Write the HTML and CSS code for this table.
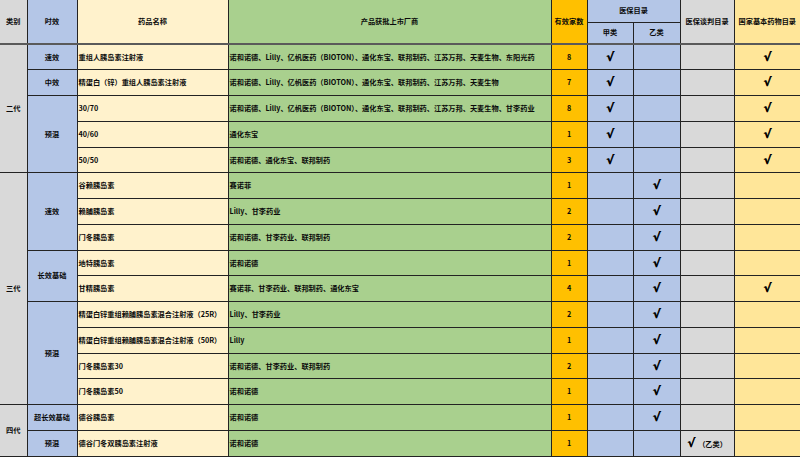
FILE: index.html
```html
<!DOCTYPE html>
<html lang="zh">
<head>
<meta charset="utf-8">
<title>胰岛素目录</title>
<link rel="stylesheet" href="styles.css">
</head>
<body>
<table class="grid">
  <colgroup>
    <col class="c-cat"><col class="c-time"><col class="c-name"><col class="c-maker"><col class="c-num"><col class="c-a"><col class="c-b"><col class="c-neg"><col class="c-ess">
  </colgroup>
  <thead>
    <tr class="h1">
      <th rowspan="2" class="cat">类别</th>
      <th rowspan="2" class="time">时效</th>
      <th rowspan="2" class="name hc">药品名称</th>
      <th rowspan="2" class="maker hc">产品获批上市厂商</th>
      <th rowspan="2" class="num">有效家数</th>
      <th colspan="2" class="ins">医保目录</th>
      <th rowspan="2" class="neg">医保谈判目录</th>
      <th rowspan="2" class="ess">国家基本药物目录</th>
    </tr>
    <tr class="h2">
      <th class="ins">甲类</th>
      <th class="ins">乙类</th>
    </tr>
  </thead>
  <tbody>
    <tr>
      <td rowspan="5" class="cat">二代</td>
      <td class="time">速效</td>
      <td class="name">重组人胰岛素注射液</td>
      <td class="maker">诺和诺德、Lilly、亿帆医药（BIOTON）、通化东宝、联邦制药、江苏万邦、天麦生物、东阳光药</td>
      <td class="num">8</td>
      <td class="ins chk">√</td><td class="ins"></td><td class="neg"></td><td class="ess chk">√</td>
    </tr>
    <tr>
      <td class="time">中效</td>
      <td class="name">精蛋白（锌）重组人胰岛素注射液</td>
      <td class="maker">诺和诺德、Lilly、亿帆医药（BIOTON）、通化东宝、联邦制药、江苏万邦、天麦生物</td>
      <td class="num">7</td>
      <td class="ins chk">√</td><td class="ins"></td><td class="neg"></td><td class="ess chk">√</td>
    </tr>
    <tr>
      <td rowspan="3" class="time">预混</td>
      <td class="name">30/70</td>
      <td class="maker">诺和诺德、Lilly、亿帆医药（BIOTON）、通化东宝、联邦制药、江苏万邦、天麦生物、甘李药业</td>
      <td class="num">8</td>
      <td class="ins chk">√</td><td class="ins"></td><td class="neg"></td><td class="ess chk">√</td>
    </tr>
    <tr>
      <td class="name">40/60</td>
      <td class="maker">通化东宝</td>
      <td class="num">1</td>
      <td class="ins chk">√</td><td class="ins"></td><td class="neg"></td><td class="ess chk">√</td>
    </tr>
    <tr>
      <td class="name">50/50</td>
      <td class="maker">诺和诺德、通化东宝、联邦制药</td>
      <td class="num">3</td>
      <td class="ins chk">√</td><td class="ins"></td><td class="neg"></td><td class="ess chk">√</td>
    </tr>
    <tr>
      <td rowspan="9" class="cat">三代</td>
      <td rowspan="3" class="time">速效</td>
      <td class="name">谷赖胰岛素</td>
      <td class="maker">赛诺菲</td>
      <td class="num">1</td>
      <td class="ins"></td><td class="ins chk">√</td><td class="neg"></td><td class="ess"></td>
    </tr>
    <tr>
      <td class="name">赖脯胰岛素</td>
      <td class="maker">Lilly、甘李药业</td>
      <td class="num">2</td>
      <td class="ins"></td><td class="ins chk">√</td><td class="neg"></td><td class="ess"></td>
    </tr>
    <tr>
      <td class="name">门冬胰岛素</td>
      <td class="maker">诺和诺德、甘李药业、联邦制药</td>
      <td class="num">2</td>
      <td class="ins"></td><td class="ins chk">√</td><td class="neg"></td><td class="ess"></td>
    </tr>
    <tr>
      <td rowspan="2" class="time">长效基础</td>
      <td class="name">地特胰岛素</td>
      <td class="maker">诺和诺德</td>
      <td class="num">1</td>
      <td class="ins"></td><td class="ins chk">√</td><td class="neg"></td><td class="ess"></td>
    </tr>
    <tr>
      <td class="name">甘精胰岛素</td>
      <td class="maker">赛诺菲、甘李药业、联邦制药、通化东宝</td>
      <td class="num">4</td>
      <td class="ins"></td><td class="ins chk">√</td><td class="neg"></td><td class="ess chk">√</td>
    </tr>
    <tr>
      <td rowspan="4" class="time">预混</td>
      <td class="name">精蛋白锌重组赖脯胰岛素混合注射液（25R）</td>
      <td class="maker">Lilly、甘李药业</td>
      <td class="num">2</td>
      <td class="ins"></td><td class="ins chk">√</td><td class="neg"></td><td class="ess"></td>
    </tr>
    <tr>
      <td class="name">精蛋白锌重组赖脯胰岛素混合注射液（50R）</td>
      <td class="maker">Lilly</td>
      <td class="num">1</td>
      <td class="ins"></td><td class="ins chk">√</td><td class="neg"></td><td class="ess"></td>
    </tr>
    <tr>
      <td class="name">门冬胰岛素30</td>
      <td class="maker">诺和诺德、甘李药业、联邦制药</td>
      <td class="num">2</td>
      <td class="ins"></td><td class="ins chk">√</td><td class="neg"></td><td class="ess"></td>
    </tr>
    <tr>
      <td class="name">门冬胰岛素50</td>
      <td class="maker">诺和诺德</td>
      <td class="num">1</td>
      <td class="ins"></td><td class="ins chk">√</td><td class="neg"></td><td class="ess"></td>
    </tr>
    <tr>
      <td rowspan="2" class="cat">四代</td>
      <td class="time">超长效基础</td>
      <td class="name">德谷胰岛素</td>
      <td class="maker">诺和诺德</td>
      <td class="num">1</td>
      <td class="ins"></td><td class="ins chk">√</td><td class="neg"></td><td class="ess"></td>
    </tr>
    <tr>
      <td class="time">预混</td>
      <td class="name">德谷门冬双胰岛素注射液</td>
      <td class="maker">诺和诺德</td>
      <td class="num">1</td>
      <td class="ins"></td><td class="ins"></td><td class="neg"><span class="chk-i">√</span><span class="note">（乙类）</span></td><td class="ess"></td>
    </tr>
  </tbody>
</table>
</body>
</html>
```

FILE: styles.css
```css
html, body {
  margin: 0;
  padding: 0;
  background: #ffffff;
}

.grid {
  width: 800px;
  table-layout: fixed;
  border-collapse: collapse;
  font-family: "Noto Sans CJK SC", "Noto Sans", sans-serif;
  font-size: 7.2px;
  font-weight: 700;
  color: #0a0a0a;
}

.c-cat { width: 27px; }
.c-time { width: 50px; }
.c-name { width: 151px; }
.c-maker { width: 323px; }
.c-num { width: 36px; }
.c-a { width: 46px; }
.c-b { width: 47px; }
.c-neg { width: 54px; }
.c-ess { width: 66px; }

.grid th,
.grid td {
  border: 1px solid #232323;
  padding: 0 2px;
  text-align: center;
  vertical-align: middle;
  line-height: 1.2;
  white-space: nowrap;
  overflow: hidden;
}

.grid th {
  font-weight: 700;
}

.h1 { height: 22px; }
.h2 { height: 22px; }

.grid thead th {
  border-top: none;
}

.h2 th,
.h1 th[rowspan] {
  border-bottom: 2px solid #5a5a5a;
}

.grid tbody tr { height: 25.75px; }

.grid tr > :first-child { border-left: none; }
.grid tr > :last-child { border-right: none; }
.grid tbody tr:last-child td { border-bottom: 1px solid #232323; }

.cat { background: #d9d9d9; border-right-color: #9a9a9a; }
.time { background: #b4c6e7; }
.name { background: #fff2cc; }
.maker { background: #a9d08e; }
.num { background: #ffc000; }
.ins { background: #b4c6e7; }
.neg { background: #d9d9d9; }
.ess { background: #ffe699; }

.grid td.name,
.grid td.maker {
  text-align: left;
  padding-left: 1px;
}

.grid th.hc { text-align: center; }

.chk,
.chk-i {
  font-family: "DejaVu Sans", sans-serif;
  font-size: 12px;
  font-weight: 700;
  color: #000;
  text-shadow: 0.4px 0 0 #000;
}

.note {
  font-size: 7.2px;
  margin-left: 3px;
}
```
